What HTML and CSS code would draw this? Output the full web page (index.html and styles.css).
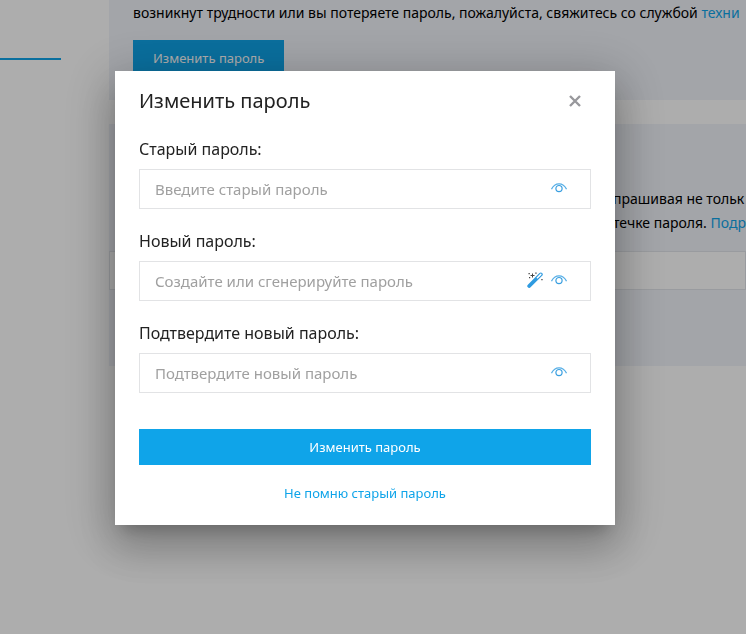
FILE: index.html
```html
<!DOCTYPE html>
<html lang="ru">
<head>
    <meta charset="UTF-8">
    <meta name="viewport" content="width=device-width, initial-scale=1.0">
    <title>Изменить пароль</title>
    <link rel="stylesheet" href="styles.css">
</head>
<body>
    <div class="page">
        <aside class="sidebar">
            <div class="sidebar-line"></div>
        </aside>
        <main class="content">
            <section class="panel panel-password">
                <p>возникнут трудности или вы потеряете пароль, пожалуйста, свяжитесь со службой <a href="#">техни</a></p>
                <button type="button" class="btn">Изменить пароль</button>
            </section>
            <section class="panel panel-auth">
                <p>прашивая не тольк</p>
                <p>течке пароля. <a href="#">Подр</a></p>
            </section>
            <div class="row"></div>
            <section class="panel panel-empty"></section>
        </main>
    </div>

    <div class="overlay">
        <form class="modal" role="dialog" aria-labelledby="modal-title">
            <div class="modal-header">
                <h2 id="modal-title">Изменить пароль</h2>
                <button type="button" class="icon-btn close" aria-label="Закрыть">
                    <svg width="14" height="14" viewBox="0 0 14 14"><path d="M2 2l10 10M12 2L2 12" fill="none" stroke="#98989c" stroke-width="2.4"/></svg>
                </button>
            </div>

            <div class="field">
                <label for="old">Старый пароль:</label>
                <div class="input-box">
                    <input type="password" id="old" placeholder="Введите старый пароль">
                    <button type="button" class="icon-btn" aria-label="Показать пароль">
                        <svg width="16" height="10" viewBox="0 0 16 10"><path d="M.5 6.2C2.2 2.6 4.8.8 8 .8s5.800 1.800 7.500 5.400" fill="none" stroke="#55aee6" stroke-width="1.200"/><circle cx="8" cy="5.600" r="3.100" fill="none" stroke="#3a9fe0" stroke-width="1.200"/></svg>
                    </button>
                </div>
            </div>

            <div class="field">
                <label for="new">Новый пароль:</label>
                <div class="input-box">
                    <input type="password" id="new" placeholder="Создайте или сгенерируйте пароль">
                    <button type="button" class="icon-btn" aria-label="Сгенерировать пароль">
                        <svg width="16" height="16" viewBox="0 0 16 16">
                            <path d="M2.200 14L13.800 2.400" stroke="#2f9be0" stroke-width="3.800" stroke-linecap="round"/>
                            <path d="M10.400 5.800L13.800 2.400" stroke="#fff" stroke-width="1.500" stroke-linecap="round"/>
                            <path d="M5.500 1.500v4M3.500 3.500h4" stroke="#444" stroke-width="1"/>
                            <path d="M1.500 1h1.300v1.300H1.500zM8.300.5h1.300v1.300H8.300zM2 5h1.200v1.200H2zM14.300 7h1.300v1.300h-1.300z" fill="#444"/>
                        </svg>
                    </button>
                    <button type="button" class="icon-btn" aria-label="Показать пароль">
                        <svg width="16" height="10" viewBox="0 0 16 10"><path d="M.5 6.2C2.2 2.6 4.8.8 8 .8s5.800 1.800 7.500 5.400" fill="none" stroke="#55aee6" stroke-width="1.200"/><circle cx="8" cy="5.600" r="3.100" fill="none" stroke="#3a9fe0" stroke-width="1.200"/></svg>
                    </button>
                </div>
            </div>

            <div class="field">
                <label for="confirm">Подтвердите новый пароль:</label>
                <div class="input-box">
                    <input type="password" id="confirm" placeholder="Подтвердите новый пароль">
                    <button type="button" class="icon-btn" aria-label="Показать пароль">
                        <svg width="16" height="10" viewBox="0 0 16 10"><path d="M.5 6.2C2.2 2.6 4.8.8 8 .8s5.800 1.800 7.500 5.400" fill="none" stroke="#55aee6" stroke-width="1.200"/><circle cx="8" cy="5.600" r="3.100" fill="none" stroke="#3a9fe0" stroke-width="1.200"/></svg>
                    </button>
                </div>
            </div>

            <button type="submit" class="btn btn-wide">Изменить пароль</button>
            <a href="#" class="forgot">Не помню старый пароль</a>
        </form>
    </div>
</body>
</html>
```
FILE: styles.css
```css
* {
    box-sizing: border-box;
}
body {
    margin: 0;
    background-color: #fff;
    color: #000;
    font-family: "Noto Sans", "Open Sans", sans-serif;
    font-size: 14px;
    line-height: 24px;
    overflow: hidden;
}
p, h2 {
    margin: 0;
}
a {
    color: #0fa4e9;
    text-decoration: none;
}
button, input {
    font-family: inherit;
}

/* Page behind the dialog */
.page {
    display: flex;
}
.sidebar {
    flex: 0 0 109px;
    padding-top: 58px;
}
.sidebar-line {
    width: 61px;
    height: 2px;
    background-color: #0fa4e9;
}
.content {
    flex: 1;
    min-width: 0;
}
.panel {
    background-color: #f0f3f9;
    padding: 0 24px;
    white-space: nowrap;
    overflow: hidden;
}
.panel-password {
    padding-top: 1px;
    padding-bottom: 24px;
    margin-bottom: 24px;
}
.panel-password .btn {
    margin-top: 15px;
}
.panel-auth {
    padding: 63px 0 16px 504px;
}
.row {
    height: 39px;
    border: 1px solid #e2e5ea;
}
.panel-empty {
    height: 76px;
}

.btn {
    display: block;
    height: 36px;
    padding: 0 20px;
    border: 0;
    background-color: #0fa4e9;
    color: #fff;
    font-size: 13px;
    cursor: pointer;
}
.btn-wide {
    width: 100%;
}

/* Dialog */
.overlay {
    position: fixed;
    inset: 0;
    padding: 71px 16px 0 0;
    background-color: rgba(0, 0, 0, 0.32);
}
.modal {
    max-width: 500px;
    margin: 0 auto;
    padding: 16px 24px 20px;
    background-color: #fff;
    color: #222;
    box-shadow: 0 11px 15px -7px rgba(0, 0, 0, 0.2),
        0 24px 38px 3px rgba(0, 0, 0, 0.14),
        0 9px 46px 8px rgba(0, 0, 0, 0.2);
}
.modal-header {
    display: flex;
    align-items: center;
    justify-content: space-between;
    padding-right: 9px;
    margin-bottom: 22px;
}
.modal-header h2 {
    font-size: 20px;
    font-weight: 400;
    line-height: 28px;
}
.icon-btn {
    display: flex;
    padding: 0;
    border: 0;
    background: none;
    cursor: pointer;
}
.field {
    margin-bottom: 20px;
}
.field label {
    display: block;
    margin-bottom: 8px;
    font-size: 16px;
}
.input-box {
    display: flex;
    align-items: center;
    gap: 8px;
    height: 40px;
    padding: 0 23px 2px 15px;
    border: 1px solid #e2e3e5;
}
.input-box input {
    flex: 1;
    min-width: 0;
    padding: 2px 0 0;
    border: 0;
    outline: 0;
    background: none;
    font-size: 15px;
}
.input-box input::placeholder {
    color: #a0a0a0;
    opacity: 1;
}
.btn-wide {
    margin-top: 36px;
}
.forgot {
    display: block;
    width: max-content;
    margin: 16px auto 0;
    font-size: 13px;
}
```
